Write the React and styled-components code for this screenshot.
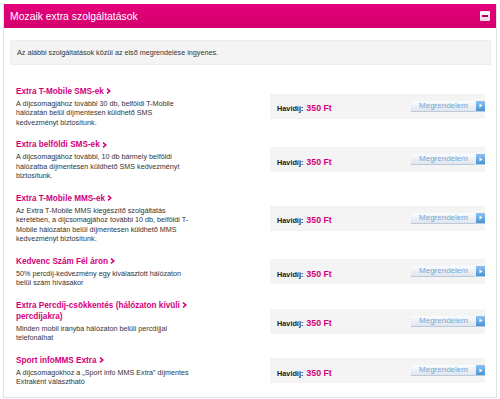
import React from "react";
import styled, { createGlobalStyle } from "styled-components";

const Global = createGlobalStyle`
  html, body { margin: 0; padding: 0; background: #fff; }
  body { font-family: "Liberation Sans", Arial, sans-serif; }
`;

const Page = styled.div`
  padding: 4px 3px 2px 3px;
  width: 500px;
  box-sizing: border-box;
`;

const Panel = styled.section`
  border: 1px solid #e2e2e2;
  border-top: none;
  background: #fff;
`;

const Header = styled.header`
  height: 24px;
  background: linear-gradient(#e4007b, #d5006f);
  display: flex;
  align-items: center;
  justify-content: space-between;
  padding: 0 6px 0 6px;
  color: #fff;
  font-size: 10.4px;
`;

const Collapse = styled.button`
  width: 10px;
  height: 10px;
  padding: 0;
  border: none;
  border-radius: 1px;
  background: linear-gradient(#ffffff, #f1d6e4);
  display: flex;
  align-items: center;
  justify-content: center;
  &::before {
    content: "";
    width: 6px;
    height: 2px;
    background: #b0005a;
  }
`;

const Content = styled.div`
  padding: 12px 5px 4px 6px;
`;

const Info = styled.div`
  height: 25px;
  box-sizing: border-box;
  background: #f4f4f4;
  border: 1px solid #eeeeee;
  display: flex;
  align-items: center;
  padding-left: 6px;
  font-size: 7.2px;
  color: #333;
`;

const List = styled.div`
  margin-top: 14.5px;
`;

const Row = styled.div`
  display: grid;
  grid-template-columns: 254px 215px;
  align-items: center;
  padding: 6px 7px 6px 6px;
`;

const TextBlock = styled.div`
  width: 181px;
`;

const Title = styled.a`
  display: block;
  font-size: 8.2px;
  font-weight: bold;
  line-height: 11px;
  color: #d3007a;
  text-decoration: none;
  margin-bottom: 2px;
`;

const Desc = styled.p`
  margin: 0;
  font-size: 7.2px;
  line-height: 9.5px;
  color: #333;
  white-space: pre-line;
`;

const Chevron = styled.svg`
  width: 5px;
  height: 6px;
  margin-left: 2px;
  vertical-align: -0.5px;
`;

const PriceBox = styled.div`
  height: 25px;
  background: #f4f4f4;
  display: flex;
  align-items: center;
  justify-content: space-between;
  padding-left: 7px;
`;

const PriceLabel = styled.span`
  font-size: 7.3px;
  font-weight: bold;
  color: #222;
`;

const PriceValue = styled.span`
  font-size: 8.8px;
  font-weight: bold;
  color: #d3007a;
  margin-left: 3px;
`;

const OrderButton = styled.button`
  display: flex;
  align-items: center;
  height: 11px;
  width: 74px;
  padding: 0;
  border: none;
  border-bottom: 1px solid #bccada;
  background: linear-gradient(#fbfcfd, #dfe6ee);
  font-family: "Liberation Sans", Arial, sans-serif;
  font-size: 8px;
  color: #77a5d6;
  cursor: pointer;
`;

const ButtonLabel = styled.span`
  flex: 1;
  text-align: center;
  line-height: 10px;
`;

const ButtonIcon = styled.span`
  width: 9px;
  height: 10px;
  background: linear-gradient(#8cc2ef, #4a92d8);
  display: flex;
  align-items: center;
  justify-content: center;
`;

const Arrow = () => (
  <Chevron viewBox="0 0 5 6">
    <path d="M1 0.6 L3.8 3 L1 5.4" fill="none" stroke="#d3007a" strokeWidth="1.6" />
  </Chevron>
);

const items = [
  {
    title: "Extra T-Mobile SMS-ek",
    desc: "A díjcsomagjához további 30 db, belföldi T-Mobile hálózatán belül díjmentesen küldhető SMS\nkedvezményt biztosítunk.",
  },
  {
    title: "Extra belföldi SMS-ek",
    desc: "A díjcsomagjához további, 10 db bármely belföldi hálózatba díjmentesen küldhető SMS kedvezményt biztosítunk.",
  },
  {
    title: "Extra T-Mobile MMS-ek",
    desc: "Az Extra T-Mobile MMS kiegészítő szolgáltatás keretében, a díjcsomagjához további 10 db, belföldi T-Mobile hálózatán belül díjmentesen küldhető MMS kedvezményt biztosítunk.",
  },
  {
    title: "Kedvenc Szám Fél áron",
    desc: "50% percdíj-kedvezmény egy kiválasztott hálózaton belül szám hívásakor",
  },
  {
    title: "Extra Percdíj-csökkentés (hálózaton kívüli",
    rest: "percdíjakra)",
    desc: "Minden mobil irányba hálózaton belüli percdíjjal telefonálhat",
  },
  {
    title: "Sport infoMMS Extra",
    desc: "A díjcsomagokhoz a „Sport info MMS Extra” díjmentes Extraként választható",
  },
];

export default function App() {
  return (
    <>
      <Global />
      <Page>
        <Panel>
          <Header>
            <span>Mozaik extra szolgáltatások</span>
            <Collapse aria-label="Bezárás" />
          </Header>
          <Content>
            <Info>Az alábbi szolgáltatások közül az első megrendelése ingyenes.</Info>
            <List>
              {items.map((it) => (
                <Row key={it.title}>
                  <TextBlock>
                    <Title href="#">
                      {it.title}
                      <Arrow />
                      {it.rest && (
                        <>
                          <br />
                          {it.rest}
                        </>
                      )}
                    </Title>
                    <Desc>{it.desc}</Desc>
                  </TextBlock>
                  <PriceBox>
                    <span>
                      <PriceLabel>Havidíj:</PriceLabel>
                      <PriceValue>350 Ft</PriceValue>
                    </span>
                    <OrderButton>
                      <ButtonLabel>Megrendelem</ButtonLabel>
                      <ButtonIcon>
                        <svg width="4" height="5" viewBox="0 0 4 5">
                          <path d="M0.5 0.5 L3.5 2.5 L0.5 4.5 Z" fill="#fff" />
                        </svg>
                      </ButtonIcon>
                    </OrderButton>
                  </PriceBox>
                </Row>
              ))}
            </List>
          </Content>
        </Panel>
      </Page>
    </>
  );
}
